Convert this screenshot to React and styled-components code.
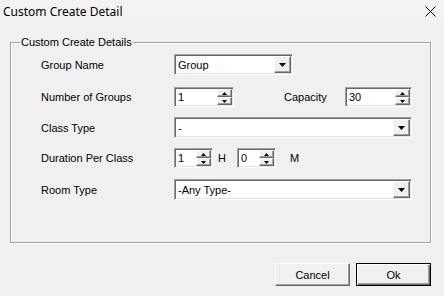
import React from "react";
import styled, { createGlobalStyle } from "styled-components";

const Global = createGlobalStyle`
  html, body { margin: 0; padding: 0; background: #f0f0f0; }
  * { box-sizing: border-box; }
`;

const Window = styled.div`
  width: 444px;
  height: 296px;
  background: #f0f0f0;
  display: flex;
  flex-direction: column;
  font-family: "Liberation Sans", Arial, sans-serif;
  font-size: 11px;
  color: #000;
  overflow: hidden;
`;

const TitleBar = styled.div`
  height: 23px;
  background: #f3f3f3;
  display: flex;
  align-items: center;
  justify-content: space-between;
  padding: 0 8px 0 3px;
`;

const Title = styled.span`
  font-family: "Noto Sans", "Open Sans", sans-serif;
  font-size: 12px;
  color: #000;
`;

const Body = styled.div`
  padding: 19px 13px 0 10px;
`;

const GroupBox = styled.div`
  position: relative;
  height: 201px;
  border: 1px solid #a0a0a0;
  box-shadow: 1px 1px 0 #fff, inset 1px 1px 0 #fff;
  padding: 11px 0 0 30px;
`;

const Legend = styled.span`
  position: absolute;
  top: -7px;
  left: 9px;
  background: #f0f0f0;
  padding: 0 1px;
  line-height: 13px;
`;

const Row = styled.div`
  display: flex;
  align-items: center;
  margin-top: ${(p) => p.$mt}px;
  height: ${(p) => p.$h}px;
`;

const Label = styled.span`
  width: ${(p) => p.$w || 133}px;
  margin-left: ${(p) => p.$ml || 0}px;
  flex: none;
  white-space: nowrap;
`;

const Unit = styled.span`
  margin: 0 ${(p) => p.$mr}px 0 ${(p) => p.$ml}px;
`;

const Sunken = styled.div`
  display: flex;
  width: ${(p) => p.$w}px;
  height: ${(p) => p.$h}px;
  border-style: solid;
  border-width: 1px;
  border-color: #a0a0a0 #fff #fff #a0a0a0;
  box-shadow: inset 1px 1px 0 #696969, inset -1px -1px 0 #e3e3e3;
  background: #fff;
  padding: 1px;
  flex: none;
`;

const Value = styled.div`
  flex: 1;
  display: flex;
  align-items: center;
  padding-left: 2px;
  background: #fff;
  white-space: nowrap;
  overflow: hidden;
`;

const RaisedBtn = styled.div`
  width: ${(p) => p.$w}px;
  height: ${(p) => p.$h || "auto"};
  flex: ${(p) => (p.$h ? "1" : "none")};
  background: #f0f0f0;
  border-style: solid;
  border-width: 1px;
  border-color: #fff #696969 #696969 #fff;
  box-shadow: inset -1px -1px 0 #a0a0a0;
  display: flex;
  align-items: center;
  justify-content: center;
`;

const SpinCol = styled.div`
  display: flex;
  flex-direction: column;
  width: 15px;
  flex: none;
`;

const Footer = styled.div`
  display: flex;
  justify-content: flex-end;
  gap: 6px;
  padding: 20px 13px 0 0;
`;

const Button = styled.button`
  width: 75px;
  height: 23px;
  font-family: "Liberation Sans", Arial, sans-serif;
  font-size: 11px;
  color: #000;
  background: #f0f0f0;
  border-style: solid;
  border-width: 1px;
  border-color: ${(p) => (p.$default ? "#000" : "#fff #696969 #696969 #fff")};
  box-shadow: ${(p) =>
    p.$default
      ? "inset 1px 1px 0 #fff, inset -1px -1px 0 #696969, inset -2px -2px 0 #a0a0a0"
      : "inset -1px -1px 0 #a0a0a0"};
  padding: 0;
`;

const DownArrow = () => (
  <svg width="7" height="4" viewBox="0 0 7 4">
    <path d="M0 0H7L3.5 4Z" fill="#000" />
  </svg>
);

const Tiny = ({ up }) => (
  <svg width="5" height="3" viewBox="0 0 5 3">
    <path d={up ? "M0 3H5L2.5 0Z" : "M0 0H5L2.5 3Z"} fill="#000" />
  </svg>
);

const Select = ({ w, value }) => (
  <Sunken $w={w} $h={21}>
    <Value>{value}</Value>
    <RaisedBtn $w={17}>
      <DownArrow />
    </RaisedBtn>
  </Sunken>
);

const Spinner = ({ w, value }) => (
  <Sunken $w={w} $h={20}>
    <Value>{value}</Value>
    <SpinCol>
      <RaisedBtn $w={15} $h="8px">
        <Tiny up />
      </RaisedBtn>
      <RaisedBtn $w={15} $h="8px">
        <Tiny />
      </RaisedBtn>
    </SpinCol>
  </Sunken>
);

export default function App() {
  return (
    <Window>
      <Global />
      <TitleBar>
        <Title>Custom Create Detail</Title>
        <svg width="11" height="11" viewBox="0 0 11 11">
          <path d="M0.5 0.5L10.5 10.5M10.5 0.5L0.5 10.5" stroke="#000" strokeWidth="1" />
        </svg>
      </TitleBar>
      <Body>
        <GroupBox>
          <Legend>Custom Create Details</Legend>
          <Row $mt={0} $h={21}>
            <Label>Group Name</Label>
            <Select w={119} value="Group" />
          </Row>
          <Row $mt={12} $h={20}>
            <Label>Number of Groups</Label>
            <Spinner w={60} value="1" />
            <Label $w={61} $ml={50}>Capacity</Label>
            <Spinner w={67} value="30" />
          </Row>
          <Row $mt={10} $h={21}>
            <Label>Class Type</Label>
            <Select w={238} value="-" />
          </Row>
          <Row $mt={10} $h={20}>
            <Label>Duration Per Class</Label>
            <Spinner w={39} value="1" />
            <Unit $ml={5} $mr={11}>H</Unit>
            <Spinner w={39} value="0" />
            <Unit $ml={14} $mr={0}>M</Unit>
          </Row>
          <Row $mt={11} $h={21}>
            <Label>Room Type</Label>
            <Select w={238} value="-Any Type-" />
          </Row>
        </GroupBox>
      </Body>
      <Footer>
        <Button>Cancel</Button>
        <Button $default>Ok</Button>
      </Footer>
    </Window>
  );
}
